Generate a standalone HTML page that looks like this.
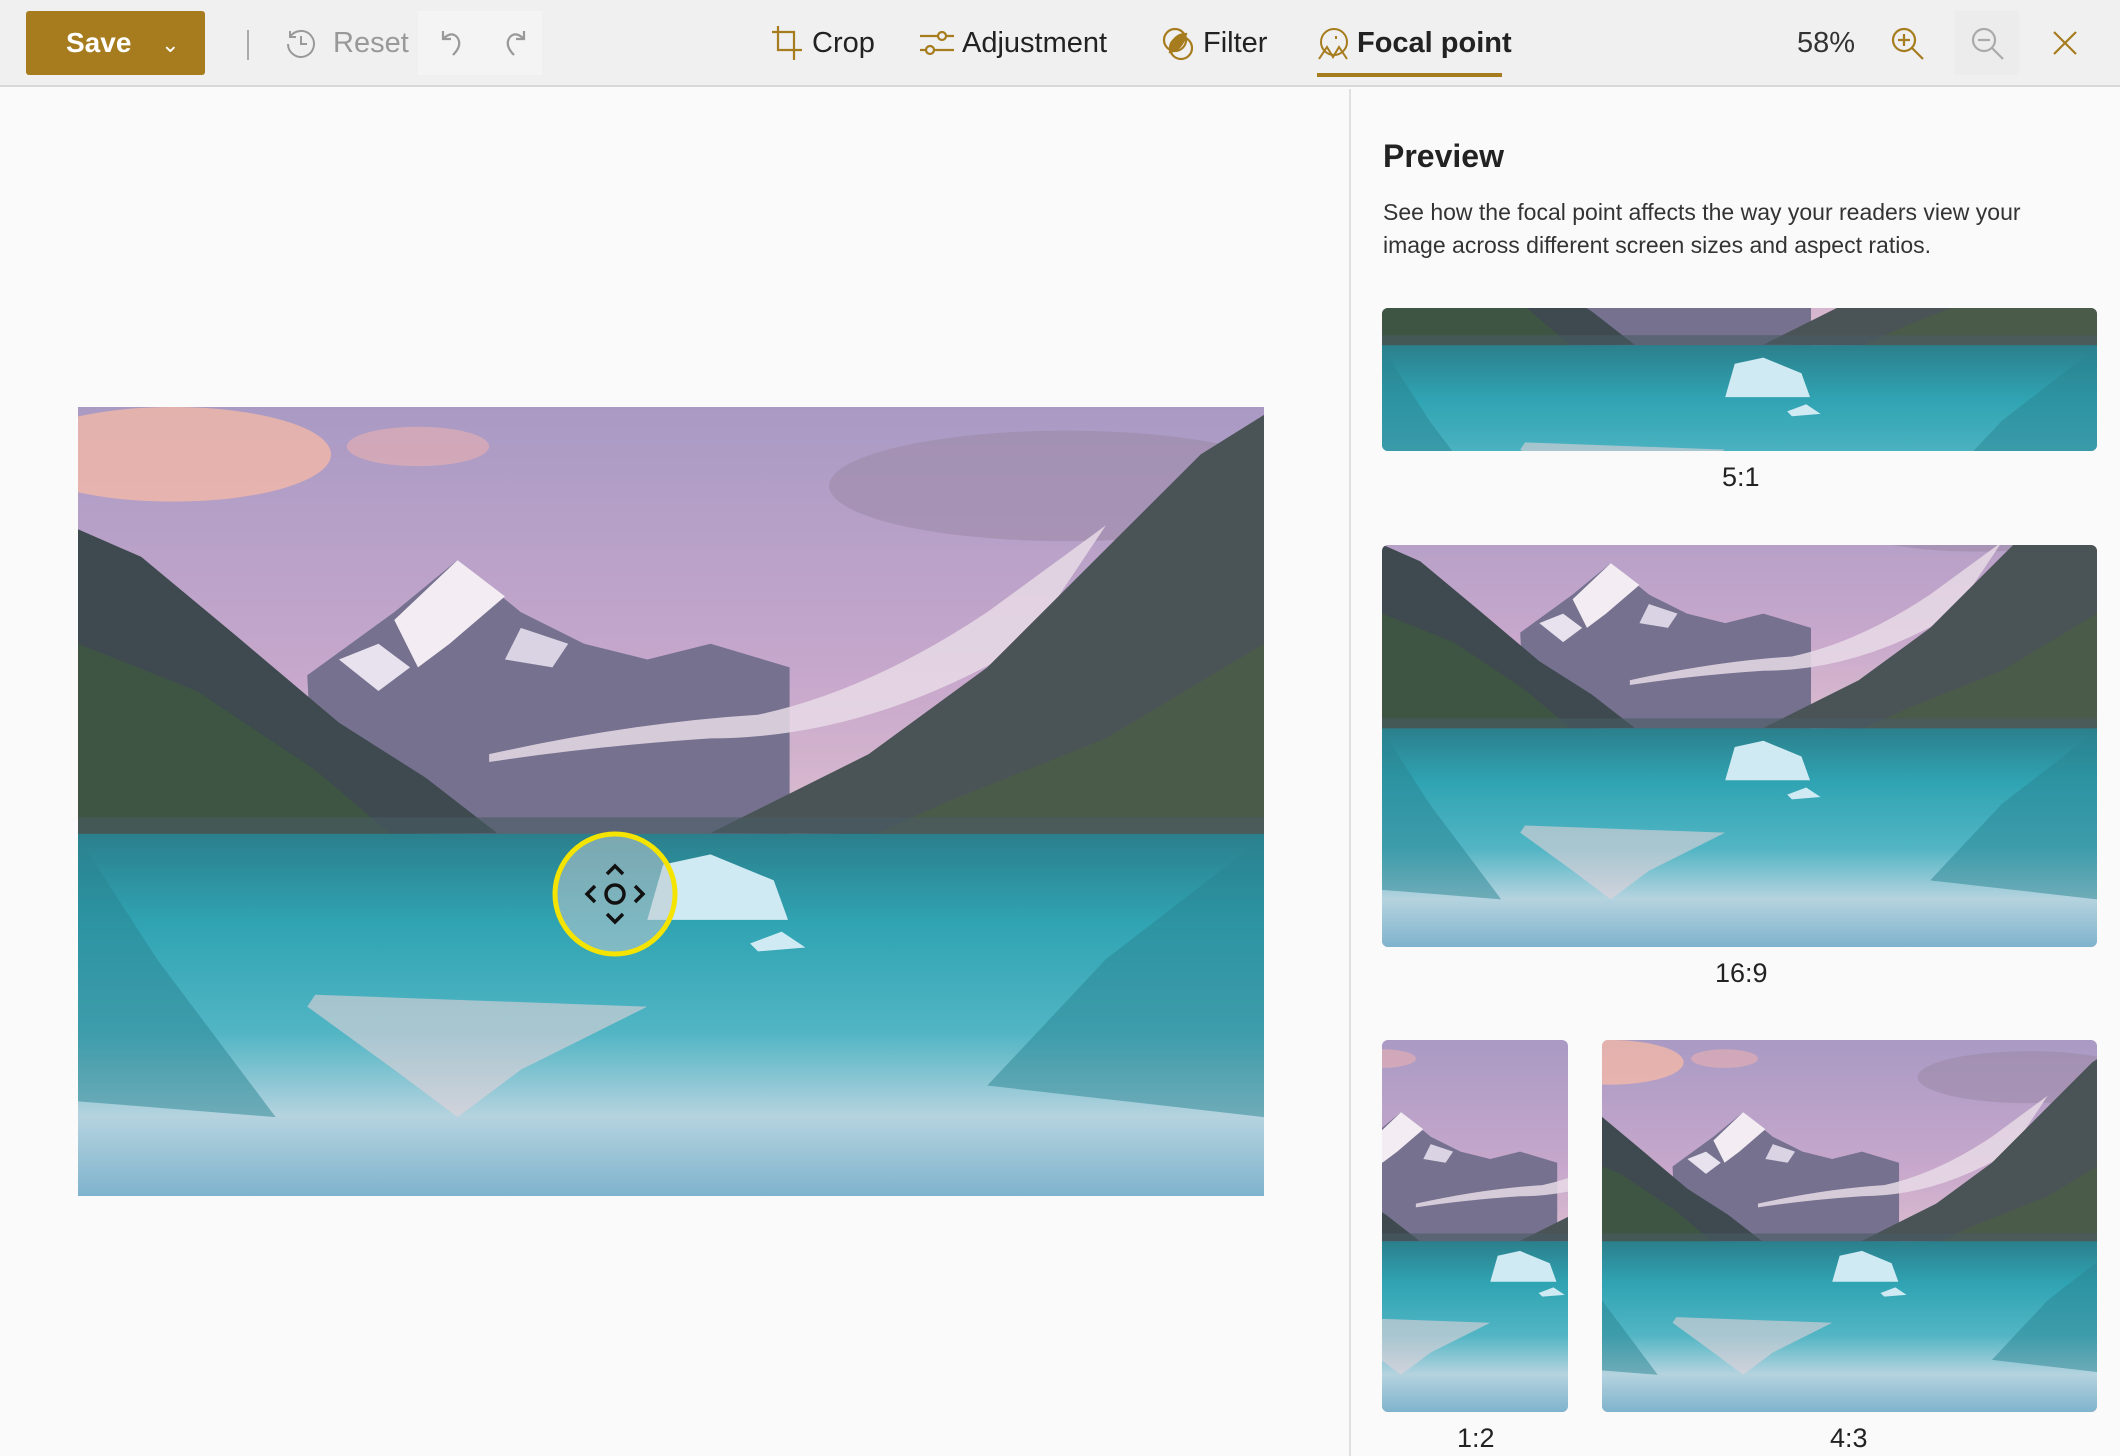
<!DOCTYPE html>
<html><head><meta charset="utf-8"><style>
*{margin:0;padding:0;box-sizing:border-box}
body{width:2120px;height:1456px;overflow:hidden;background:#fafafa;font-family:"Segoe UI","Liberation Sans",sans-serif;color:#222;position:relative}
.top{position:absolute;left:0;top:0;width:2120px;height:87px;background:#f0f0f0;border-bottom:2px solid #d8d8d8}
.save{position:absolute;left:26px;top:11px;width:179px;height:64px;background:#a67c1e;border-radius:3px;color:#fff;font-size:28px;font-weight:600;line-height:64px;padding-left:40px}
.t{position:absolute;top:24px;font-size:29px;line-height:38px}
.abs{position:absolute}
.right{position:absolute;left:1349px;top:89px;width:771px;height:1367px;border-left:2px solid #e0e0e0;background:#fafafa}
.lbl{position:absolute;font-size:27px;color:#222}
svg.th{position:absolute;border-radius:6px}
</style></head><body>
<svg width="0" height="0" style="position:absolute">
<defs>
<linearGradient id="sky" x1="0" y1="0" x2="0" y2="1"><stop offset="0" stop-color="#a99ac4"/><stop offset=".35" stop-color="#c8a8cc"/><stop offset=".55" stop-color="#ddbfcf"/></linearGradient>
<linearGradient id="wat" x1="0" y1="0" x2="0" y2="1"><stop offset="0" stop-color="#2b7f8c"/><stop offset=".25" stop-color="#30a4b3"/><stop offset=".55" stop-color="#52b5c4"/><stop offset=".78" stop-color="#b5d3df"/><stop offset="1" stop-color="#7fb3cd"/></linearGradient>
<symbol id="land" viewBox="0 0 1500 1000">
<rect width="1500" height="1000" fill="url(#sky)"/>
<ellipse cx="120" cy="60" rx="200" ry="60" fill="#f2b8a8" opacity=".8"/>
<ellipse cx="430" cy="50" rx="90" ry="25" fill="#eab0b0" opacity=".6"/>
<ellipse cx="1250" cy="100" rx="300" ry="70" fill="#9d8aa8" opacity=".6"/>
<polygon points="290,340 400,260 480,194 560,260 640,300 720,320 800,300 900,330 900,545 300,545" fill="#75718f"/>
<polygon points="400,270 480,194 540,240 470,300 430,330" fill="#f3ecf2"/>
<polygon points="330,320 380,300 420,330 380,360" fill="#e8e2ee"/>
<polygon points="560,280 620,300 600,330 540,320" fill="#d9d3e3"/>
<path d="M520,440 Q700,400 860,390 Q1000,360 1150,260 L1300,150 L1200,300 Q1000,420 800,420 Q650,430 520,450Z" fill="#e8dbe6" opacity=".85"/>
<polygon points="0,155 80,190 200,290 330,400 440,470 530,540 0,545" fill="#3e4a4f"/>
<polygon points="0,300 150,360 300,460 400,545 0,545" fill="#3f5a3e" opacity=".7"/>
<polygon points="1500,10 1420,60 1300,180 1150,330 1000,440 800,540 1500,545" fill="#4a5356"/>
<polygon points="1500,300 1300,420 1100,500 1000,545 1500,545" fill="#4b6045" opacity=".7"/>
<rect x="0" y="520" width="1500" height="25" fill="#4a5c64" opacity=".6"/>
<rect y="541" width="1500" height="459" fill="url(#wat)"/>
<polygon points="0,545 100,700 250,900 0,880" fill="#2a8492" opacity=".5"/>
<polygon points="1500,545 1300,700 1150,860 1500,900" fill="#2a8492" opacity=".5"/>
<polygon points="290,760 400,840 480,900 560,840 640,800 720,760 300,745" fill="#e3d2d8" opacity=".6"/>
<polygon points="720,650 740,580 800,567 880,600 898,650" fill="#cfeaf3"/>
<polygon points="850,680 890,665 920,685 860,690" fill="#cfeaf3"/>
</symbol>
</defs></svg>

<div class="top">
<div class="save">Save <span style="font-weight:400;font-size:22px;margin-left:22px">&#8964;</span></div>
<div class="abs" style="left:247px;top:30px;width:2px;height:30px;background:#aaa"></div>
<svg class="abs" style="left:284px;top:27px" width="34" height="34" viewBox="0 0 34 34" fill="none" stroke="#999" stroke-width="2"><path d="M6 10A13 13 0 1 1 4 17"/><path d="M6 4v6h6"/><path d="M17 9v8h6"/></svg>
<div class="t" style="left:333px;color:#999">Reset</div>
<div class="abs" style="left:418px;top:11px;width:124px;height:64px;background:#f4f4f4"></div>
<svg class="abs" style="left:437px;top:27px" width="30" height="32" viewBox="0 0 30 32" fill="none" stroke="#999" stroke-width="2.2"><path d="M6 4v8h8"/><path d="M6 12Q14 4 20 10Q26 18 16 28"/></svg>
<svg class="abs" style="left:500px;top:27px" width="30" height="32" viewBox="0 0 30 32" fill="none" stroke="#999" stroke-width="2.2"><path d="M24 4v8h-8"/><path d="M24 12Q16 4 10 10Q4 18 14 28"/></svg>
<svg class="abs" style="left:772px;top:26px" width="32" height="34" viewBox="0 0 32 34" fill="none" stroke="#a67c1e" stroke-width="2.2"><path d="M6 0v24h24"/><path d="M0 6h22v28"/></svg>
<div class="t" style="left:812px">Crop</div>
<svg class="abs" style="left:920px;top:28px" width="34" height="30" viewBox="0 0 34 30" fill="none" stroke="#a67c1e" stroke-width="2.2"><path d="M0 8h18M26 8h8M0 22h6M14 22h20"/><circle cx="22" cy="8" r="4"/><circle cx="10" cy="22" r="4"/></svg>
<div class="t" style="left:962px">Adjustment</div>
<svg class="abs" style="left:1162px;top:26px" width="34" height="36" viewBox="0 0 34 36" fill="none" stroke="#a67c1e" stroke-width="2.2"><circle cx="13" cy="14" r="11"/><circle cx="19" cy="22" r="11"/><path d="M8 26Q20 24 24 8Q10 8 8 26Z" fill="#a67c1e"/></svg>
<div class="t" style="left:1203px">Filter</div>
<svg class="abs" style="left:1317px;top:27px" width="34" height="34" viewBox="0 0 34 34" fill="none" stroke="#a67c1e" stroke-width="2"><circle cx="17" cy="15" r="13"/><path d="M2 32L10 20L16 30L22 20L30 32"/><path d="M19 9v3"/></svg>
<div class="t" style="left:1357px;font-weight:600">Focal point</div>
<div class="abs" style="left:1317px;top:73px;width:185px;height:4px;background:#a67c1e"></div>
<div class="t" style="left:1797px;color:#333">58%</div>
<svg class="abs" style="left:1891px;top:27px" width="34" height="34" viewBox="0 0 34 34" fill="none" stroke="#a67c1e" stroke-width="2.2"><circle cx="13" cy="13" r="11"/><path d="M21 21l11 11M13 7v12M7 13h12"/></svg>
<div class="abs" style="left:1955px;top:11px;width:64px;height:64px;background:#ececec"></div>
<svg class="abs" style="left:1971px;top:27px" width="34" height="34" viewBox="0 0 34 34" fill="none" stroke="#aaa" stroke-width="2.2"><circle cx="13" cy="13" r="11"/><path d="M21 21l11 11M7 13h12"/></svg>
<svg class="abs" style="left:2052px;top:30px" width="26" height="26" viewBox="0 0 26 26" stroke="#a67c1e" stroke-width="2.2"><path d="M2 2l22 22M24 2L2 24"/></svg>
</div>

<svg class="abs" style="left:78px;top:407px" width="1186" height="789" viewBox="0 0 1500 1000" preserveAspectRatio="none"><use href="#land"/></svg>
<svg class="abs" style="left:551px;top:830px" width="128" height="128" viewBox="0 0 128 128"><circle cx="64" cy="64" r="60" fill="rgba(190,200,205,.55)" stroke="#f4e400" stroke-width="5"/><g fill="none" stroke="#111" stroke-width="3.5"><circle cx="64" cy="64" r="9"/><path d="M56 44l8-8 8 8M56 84l8 8 8-8M44 56l-8 8 8 8M84 56l8 8-8 8"/></g></svg>

<div class="right">
<div class="abs" style="left:32px;top:49px;font-size:32px;font-weight:600">Preview</div>
<div class="abs" style="left:32px;top:107px;width:690px;font-size:23px;line-height:33px;color:#333">See how the focal point affects the way your readers view your image across different screen sizes and aspect ratios.</div>
</div>
<svg class="th" style="left:1382px;top:308px" width="715" height="143" viewBox="0 463 1500 300" preserveAspectRatio="none"><use href="#land" width="1500" height="1000"/></svg>
<div class="lbl" style="left:1722px;top:462px">5:1</div>
<svg class="th" style="left:1382px;top:545px" width="715" height="402" viewBox="0 156 1500 844" preserveAspectRatio="none"><use href="#land" width="1500" height="1000"/></svg>
<div class="lbl" style="left:1715px;top:958px">16:9</div>
<svg class="th" style="left:1382px;top:1040px" width="186" height="372" viewBox="429 0 500 1000" preserveAspectRatio="none"><use href="#land" width="1500" height="1000"/></svg>
<div class="lbl" style="left:1457px;top:1423px">1:2</div>
<svg class="th" style="left:1602px;top:1040px" width="495" height="372" viewBox="100 0 1333 1000" preserveAspectRatio="none"><use href="#land" width="1500" height="1000"/></svg>
<div class="lbl" style="left:1830px;top:1423px">4:3</div>
</body></html>
